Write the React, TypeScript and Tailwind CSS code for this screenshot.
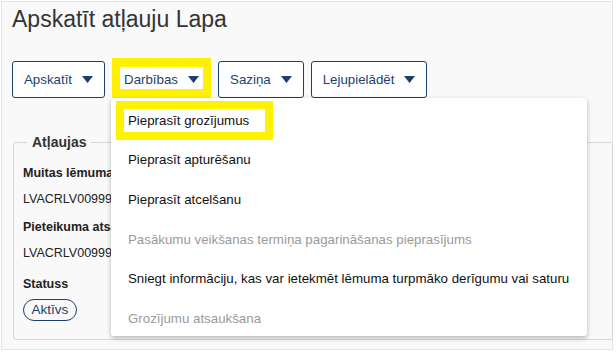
import React from "react";

const navy = "text-[#1d3f6e]";

function Caret() {
  return (
    <svg width="11" height="7" viewBox="0 0 11 7" className="shrink-0">
      <path d="M0 0h11L5.5 7z" fill="#1d3f6e" />
    </svg>
  );
}

function MenuButton({
  label,
  highlighted = false,
}: {
  label: string;
  highlighted?: boolean;
}) {
  return (
    <button
      type="button"
      className={`relative flex h-[37px] items-center gap-[10px] rounded-[3px] border border-[#1d3f6e] bg-white pl-[11px] pr-[11px] text-[13.3px] ${navy}`}
    >
      <span>{label}</span>
      <Caret />
      {highlighted && (
        <span className="pointer-events-none absolute -top-[4px] -left-[1px] -right-[1px] -bottom-[1px] border-x-[8px] border-y-[9px] border-[#fff200]" />
      )}
    </button>
  );
}

const menuItems: { label: string; disabled?: boolean; marked?: boolean }[] = [
  { label: "Pieprasīt grozījumus", marked: true },
  { label: "Pieprasīt apturēšanu" },
  { label: "Pieprasīt atcelšanu" },
  { label: "Pasākumu veikšanas termiņa pagarināšanas pieprasījums", disabled: true },
  { label: "Sniegt informāciju, kas var ietekmēt lēmuma turpmāko derīgumu vai saturu" },
  { label: "Grozījumu atsaukšana", disabled: true },
];

export default function App() {
  return (
    <div
      className="relative h-[353px] w-[616px] overflow-hidden bg-white"
      style={{ fontFamily: '"Liberation Sans", Arial, sans-serif' }}
    >
      <div className="ml-[1px] mt-[1px] flex h-[349px] w-[612px] flex-col border border-[#e4e4e4] bg-[#f9f9f9] pl-[10px]">
        <h1 className="mt-[3px] text-[23px] leading-[28px] text-[#333]">Apskatīt atļauju Lapa</h1>

        <div className="mt-[28px] flex gap-[7px]">
          <MenuButton label="Apskatīt" />
          <MenuButton label="Darbības" highlighted />
          <MenuButton label="Saziņa" />
          <MenuButton label="Lejupielādēt" />
        </div>

        <fieldset className="ml-[1px] mr-[-1px] mt-[36px] h-[206px] rounded-[3px] border border-[#d6d6d6] pl-[9px] pr-[9px]">
          <legend className="ml-[4px] px-[5px] text-[14px] font-bold leading-[16px] text-[#333]">
            Atļaujas
          </legend>
          <div className="flex flex-col text-[12.5px] leading-[14px] text-[#222]">
            <div className="mt-[16px] whitespace-nowrap font-bold">Muitas lēmuma atsauces numurs</div>
            <div className="mt-[12px] whitespace-nowrap">LVACRLV0099999999</div>
            <div className="mt-[14px] whitespace-nowrap font-bold">Pieteikuma atsauces numurs</div>
            <div className="mt-[12px] whitespace-nowrap">LVACRLV0099999999</div>
            <div className="mt-[17px] font-bold">Statuss</div>
            <span className="mt-[8px] inline-flex h-[22px] w-[54px] items-center justify-center rounded-full border border-[#1d3f6e] text-[13.5px] text-[#1d3f6e]">
              Aktīvs
            </span>
          </div>
        </fieldset>
      </div>

      <div className="absolute left-[111px] top-[98px] h-[238px] w-[476px] rounded-[3px] bg-white pt-[3px] shadow-[0_2px_5px_rgba(0,0,0,0.28)]">
        {menuItems.map((item) =>
          item.marked ? (
            <div key={item.label} className="flex h-[39.6px] items-center pl-[5px]">
              <span className="border-[8px] border-[#fff200] bg-white pl-[4px] pr-[16px] py-[2px] text-[13.3px] leading-[19px] text-[#111]">
                {item.label}
              </span>
            </div>
          ) : (
            <div
              key={item.label}
              className={`flex h-[39.6px] items-center whitespace-nowrap pl-[17px] text-[13.3px] ${
                item.disabled ? "text-[#9a9a9a]" : "text-[#111]"
              }`}
            >
              {item.label}
            </div>
          ),
        )}
      </div>
    </div>
  );
}
